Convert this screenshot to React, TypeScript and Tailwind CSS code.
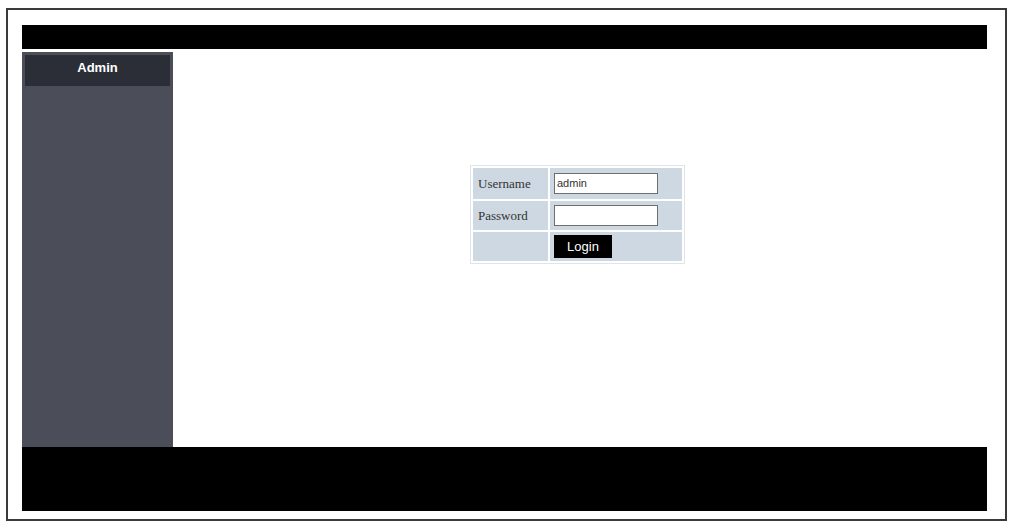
import React from "react";

export default function App() {
  return (
    <div className="w-[1012px] h-[523px] bg-white pt-[8px] pl-[6px]">
      <div className="w-[1001px] h-[513px] border-2 border-[#3a3a3a] flex flex-col pt-[15px] pl-[14px] pr-[18px] pb-[8px]">
        {/* header strip */}
        <div className="h-[24px] bg-black shrink-0" />
        <div className="flex flex-1 mt-[3px]">
          {/* left menu */}
          <div className="w-[151px] bg-[#4b4e58] pt-[3px] px-[3px] shrink-0">
            <div className="h-[31px] bg-[#2c2e37] flex items-center justify-center text-white font-bold text-[13px] font-['Liberation_Sans',Arial,sans-serif] pb-[6px]">
              Admin
            </div>
          </div>
          {/* content area */}
          <div className="flex-1 pt-[113px] pl-[297px]">
            <table className="border border-[#dde4ea] bg-white border-separate border-spacing-[2px] font-['Liberation_Serif','Times_New_Roman',serif] text-[13px] text-[#333]">
              <tbody>
                <tr>
                  <td className="bg-[#cdd8e2] w-[75px] h-[31px] pl-[5px]">Username</td>
                  <td className="bg-[#cdd8e2] w-[132px] h-[31px] pl-[4px]">
                    <div className="w-[104px] h-[21px] bg-white border border-[#6f6f6f] text-[11px] text-[#333] font-['Liberation_Sans',Arial,sans-serif] flex items-center pl-[2px]">
                      admin
                    </div>
                  </td>
                </tr>
                <tr>
                  <td className="bg-[#cdd8e2] h-[29px] pl-[5px]">Password</td>
                  <td className="bg-[#cdd8e2] h-[29px] pl-[4px]">
                    <div className="w-[104px] h-[21px] bg-white border border-[#6f6f6f]" />
                  </td>
                </tr>
                <tr>
                  <td className="bg-[#cdd8e2] h-[29px]" />
                  <td className="bg-[#cdd8e2] h-[29px] pl-[4px]">
                    <div className="w-[58px] h-[23px] bg-black text-white text-[13px] font-['Liberation_Sans',Arial,sans-serif] flex items-center justify-center">
                      Login
                    </div>
                  </td>
                </tr>
              </tbody>
            </table>
          </div>
        </div>
        {/* footer strip */}
        <div className="h-[64px] bg-black shrink-0" />
      </div>
    </div>
  );
}
